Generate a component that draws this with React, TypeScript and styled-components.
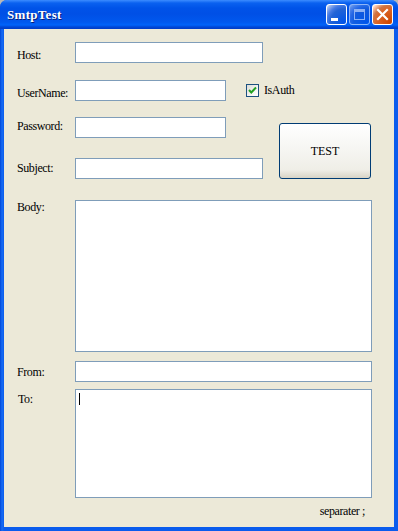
import styled, { createGlobalStyle } from "styled-components";

const GlobalStyle = createGlobalStyle`
  html, body {
    margin: 0;
    padding: 0;
    background: #b8b8b8;
    font-family: "Liberation Serif", "Times New Roman", serif;
  }
  #root {
    width: 398px;
    height: 531px;
  }
`;

const Window = styled.div`
  width: 398px;
  height: 531px;
  box-sizing: border-box;
  display: flex;
  flex-direction: column;
  background: linear-gradient(90deg, #0046d8 0, #166cf4 2px, #0a5ced 4px, #0a5ced 100%);
  border-radius: 7px 7px 0 0;
  overflow: hidden;
  font-family: "Liberation Serif", "Times New Roman", serif;
`;

const TitleBar = styled.div`
  height: 29px;
  flex: none;
  display: flex;
  align-items: center;
  padding: 0 5px 0 7px;
  background: linear-gradient(
    180deg,
    #3c8cff 0,
    #0a61f0 3px,
    #0053e8 8px,
    #0050e6 14px,
    #0058ee 22px,
    #0063fa 25px,
    #0047d6 27px,
    #003cc7 29px
  );
`;

const Title = styled.div`
  flex: 1;
  color: #fff;
  font-weight: bold;
  font-size: 13px;
  letter-spacing: 0.3px;
  text-shadow: 1px 1px 0 #0a1e78;
  padding-top: 1px;
`;

const Controls = styled.div`
  display: flex;
  gap: 2px;
`;

const CtrlButton = styled.div<{ $kind: "min" | "max" | "close" }>`
  width: 21px;
  height: 21px;
  box-sizing: border-box;
  border: 1px solid #fff;
  border-radius: 3px;
  display: flex;
  align-items: center;
  justify-content: center;
  opacity: ${(p) => (p.$kind === "max" ? 0.55 : 1)};
  background: ${(p) =>
    p.$kind === "close"
      ? "radial-gradient(circle at 90% 90%, #cc4600 0%, #dc6527 55%, #cd7546 70%, #ffccb2 90%, #fff 100%)"
      : "radial-gradient(circle at 90% 90%, #0054e9 0%, #2263d5 55%, #4479e4 70%, #a3bbec 90%, #fff 100%)"};
`;

const Client = styled.div`
  flex: 1;
  margin: 0 4px 4px 4px;
  background: #ece9d8;
  padding: 13px 0 0 13px;
  display: flex;
  flex-direction: column;
  font-size: 12px;
  letter-spacing: -0.4px;
  color: #000;
`;

const TopGrid = styled.div`
  display: grid;
  grid-template-columns: 58px 151px 20px 17px 16px 92px;
  grid-template-rows: 38px 37px 41px 21px;
`;

const Label = styled.div<{ $top: number; $left?: number; $row?: number }>`
  grid-column: 1;
  grid-row: ${(p) => p.$row ?? "auto"};
  box-sizing: border-box;
  padding-top: ${(p) => p.$top}px;
  padding-left: ${(p) => p.$left ?? 0}px;
  line-height: 12px;
  white-space: nowrap;
`;

const TextBox = styled.div<{ $col?: string; $row?: number; $height?: number }>`
  grid-column: ${(p) => p.$col ?? "auto"};
  grid-row: ${(p) => p.$row ?? "auto"};
  height: ${(p) => p.$height ?? 21}px;
  box-sizing: border-box;
  border: 1px solid #7f9db9;
  background: #fff;
  align-self: start;
  position: relative;
`;

const CheckRow = styled.label`
  grid-column: 4 / 7;
  grid-row: 2;
  display: flex;
  align-items: center;
  gap: 5px;
  align-self: start;
  margin-top: 3px;
  white-space: nowrap;
`;

const CheckBox = styled.div`
  width: 13px;
  height: 13px;
  box-sizing: border-box;
  border: 1px solid #1c5180;
  background: linear-gradient(135deg, #dcdcd7 0%, #f4f4f2 60%, #fff 100%);
  display: flex;
  align-items: center;
  justify-content: center;
`;

const TestButton = styled.button`
  grid-column: 6;
  grid-row: 3 / 5;
  align-self: end;
  height: 56px;
  margin: 0;
  box-sizing: border-box;
  border: 1px solid #003c74;
  border-radius: 3px;
  background: linear-gradient(180deg, #fff 0%, #f7f7f4 40%, #efeee7 85%, #d8d4c6 100%);
  font-family: "Liberation Serif", "Times New Roman", serif;
  font-size: 12px;
  color: #000;
  padding: 0;
`;

const Row = styled.div<{ $gap: number }>`
  display: flex;
  margin-top: ${(p) => p.$gap}px;
`;

const RowLabel = styled(Label)`
  width: 58px;
  flex: none;
`;

const WideBox = styled(TextBox)`
  width: 297px;
`;

const Caret = styled.span`
  position: absolute;
  left: 3px;
  top: 3px;
  width: 1px;
  height: 12px;
  background: #000;
`;

const Note = styled.div`
  width: 355px;
  text-align: right;
  margin-top: 7px;
  padding-right: 7px;
  box-sizing: border-box;
  line-height: 12px;
`;

export default function App() {
  return (
    <>
      <GlobalStyle />
      <Window>
        <TitleBar>
          <Title>SmtpTest</Title>
          <Controls>
            <CtrlButton $kind="min">
              <svg width="19" height="19" viewBox="0 0 19 19">
                <rect x="4" y="13" width="7" height="3" fill="#fff" />
              </svg>
            </CtrlButton>
            <CtrlButton $kind="max">
              <svg width="19" height="19" viewBox="0 0 19 19">
                <rect x="4.5" y="4.5" width="10" height="10" fill="none" stroke="#fff" strokeWidth="1" />
                <rect x="4" y="4" width="11" height="3" fill="#fff" />
              </svg>
            </CtrlButton>
            <CtrlButton $kind="close">
              <svg width="19" height="19" viewBox="0 0 19 19">
                <path d="M5 5 L14 14 M14 5 L5 14" stroke="#fff" strokeWidth="2.2" strokeLinecap="square" />
              </svg>
            </CtrlButton>
          </Controls>
        </TitleBar>
        <Client>
          <TopGrid>
            <Label $top={7} $row={1}>Host:</Label>
            <TextBox $col="2 / 5" $row={1} />

            <Label $top={7} $row={2}>UserName:</Label>
            <TextBox $col="2" $row={2} />
            <CheckRow>
              <CheckBox>
                <svg width="9" height="9" viewBox="0 0 9 9">
                  <path d="M1 4 L3.3 6.5 L8 1.5" fill="none" stroke="#21a121" strokeWidth="2" />
                </svg>
              </CheckBox>
              IsAuth
            </CheckRow>

            <Label $top={3} $row={3}>Password:</Label>
            <TextBox $col="2" $row={3} />
            <TestButton>TEST</TestButton>

            <Label $top={4} $row={4}>Subject:</Label>
            <TextBox $col="2 / 5" $row={4} />
          </TopGrid>

          <Row $gap={21}>
            <RowLabel $top={1}>Body:</RowLabel>
            <WideBox $height={152} />
          </Row>
          <Row $gap={9}>
            <RowLabel $top={5}>From:</RowLabel>
            <WideBox />
          </Row>
          <Row $gap={7}>
            <RowLabel $top={4} $left={1}>To:</RowLabel>
            <WideBox $height={109}>
              <Caret />
            </WideBox>
          </Row>
          <Note>separater ;</Note>
        </Client>
      </Window>
    </>
  );
}
